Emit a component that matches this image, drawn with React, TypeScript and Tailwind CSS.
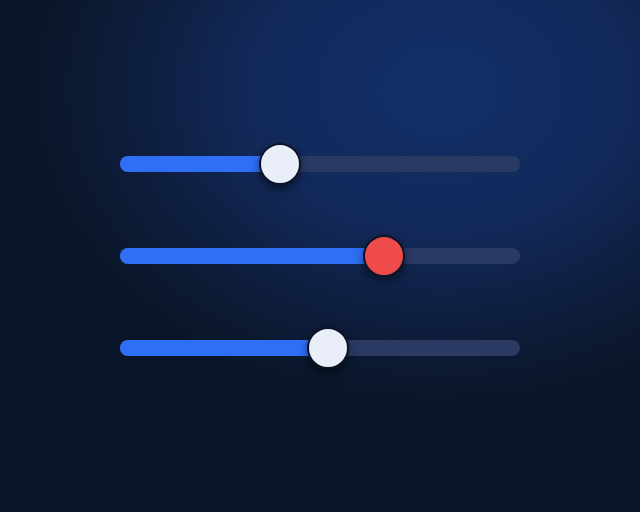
import React from "react";

const sliders = [
  { value: 40, color: "bg-[#e9eef8]" },
  { value: 66, color: "bg-[#ef4b4b]" },
  { value: 52, color: "bg-[#e9eef8]" },
];

export default function App() {
  return (
    <div className="w-[640px] h-[512px] bg-[#0a1527] bg-[radial-gradient(ellipse_420px_320px_at_440px_90px,#13306a_0%,#12295a_45%,#0e1e3e_72%,#0a1527_100%)] flex flex-col items-center justify-center">
      <div className="flex flex-col gap-[76px]">
        {sliders.map((s, i) => (
          <div key={i} className="relative w-[400px] h-[16px] rounded-full bg-[#2a3a63]">
            <div
              className="absolute left-0 top-0 h-full rounded-full bg-[#2f6ff6]"
              style={{ width: `${s.value}%` }}
            />
            <div
              className={`absolute top-1/2 w-[42px] h-[42px] -translate-x-1/2 -translate-y-1/2 rounded-full border-2 border-[#0a1426] ${s.color} shadow-[0_4px_10px_rgba(0,0,0,0.5)]`}
              style={{ left: `${s.value}%` }}
            />
          </div>
        ))}
      </div>
    </div>
  );
}
